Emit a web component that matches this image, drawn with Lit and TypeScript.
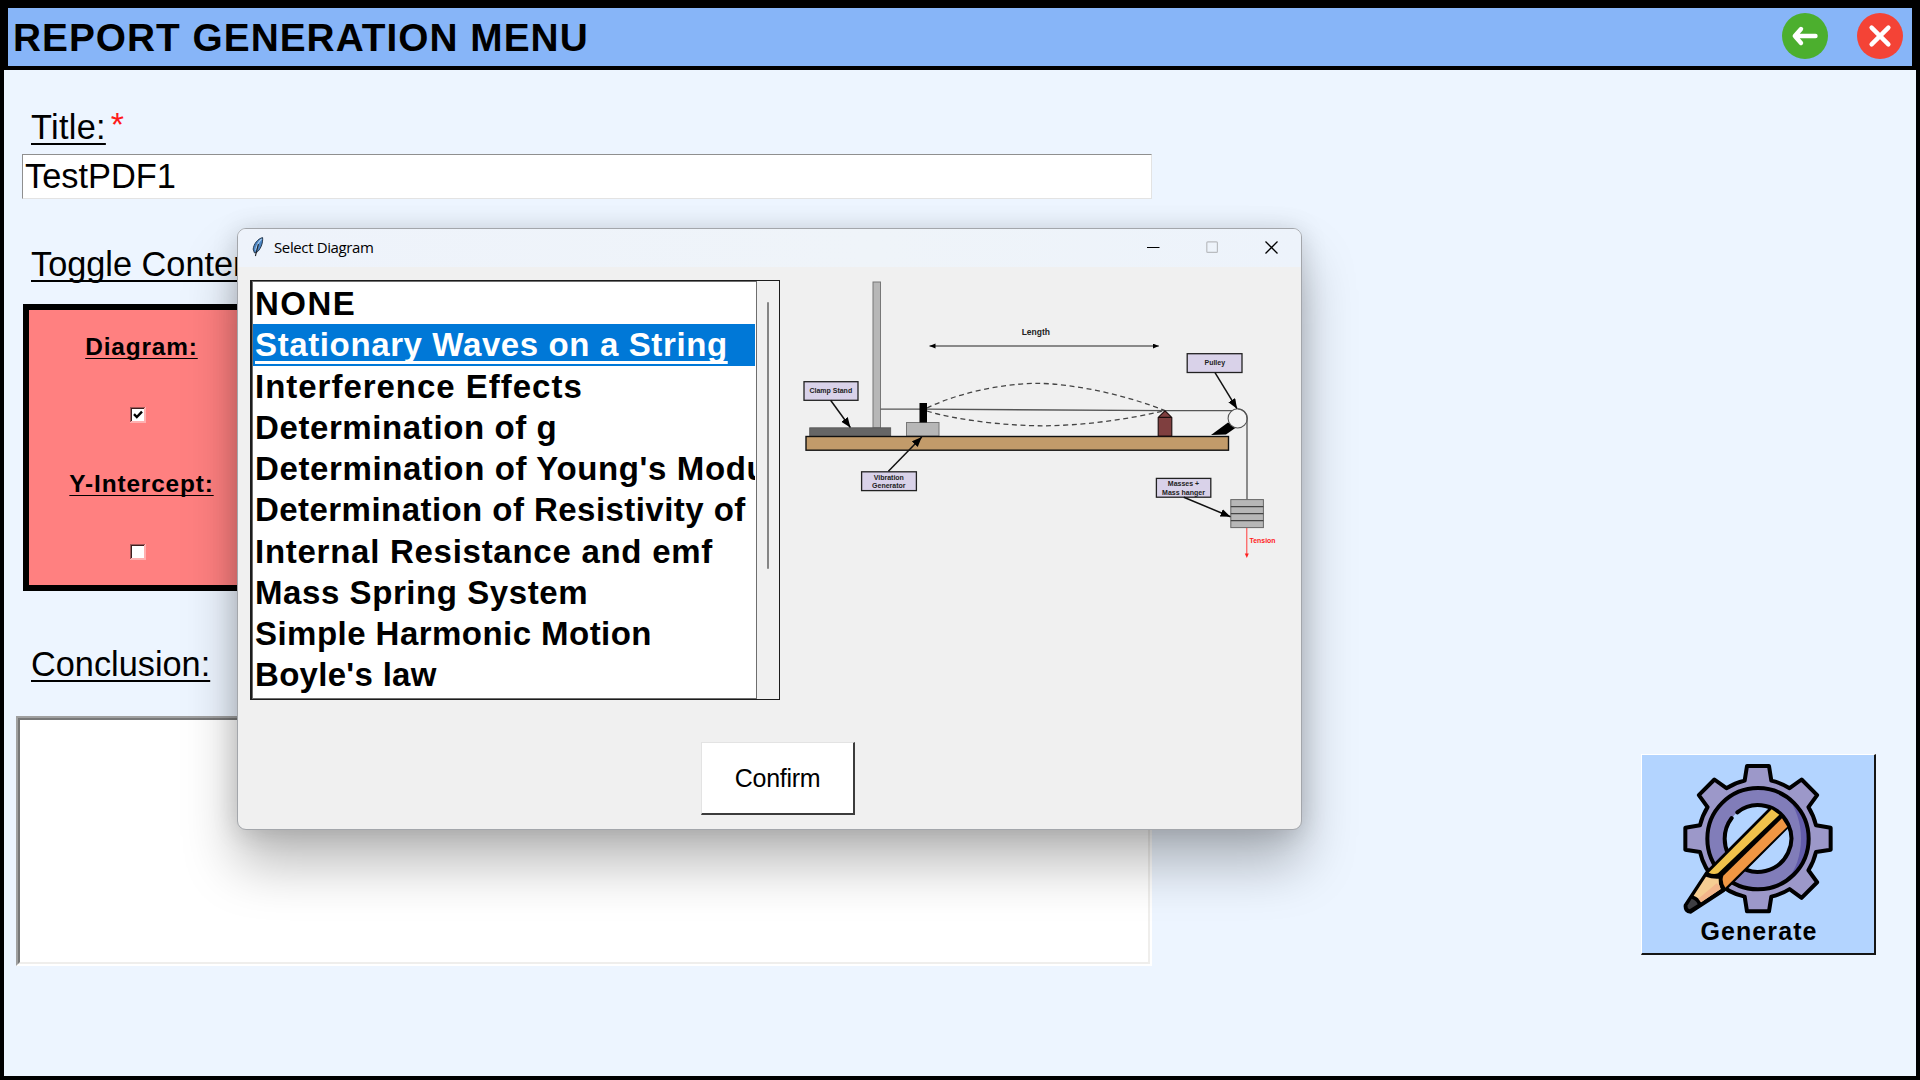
import { LitElement, html, css, svg } from "lit";
import { customElement, property } from "lit/decorators.js";
import { classMap } from "lit/directives/class-map.js";
import { styleMap } from "lit/directives/style-map.js";

interface Experiment {
  name: string;
  tracking: number;
}

const EXPERIMENTS: Experiment[] = [
  { name: "NONE", tracking: 1.5 },
  { name: "Stationary Waves on a String", tracking: 0.62 },
  { name: "Interference Effects", tracking: 0.98 },
  { name: "Determination of g", tracking: 0.6 },
  { name: "Determination of Young's Modulus", tracking: 0.62 },
  { name: "Determination of Resistivity of", tracking: 0.45 },
  { name: "Internal Resistance and emf", tracking: 0.73 },
  { name: "Mass Spring System", tracking: 0.57 },
  { name: "Simple Harmonic Motion", tracking: 0.46 },
  { name: "Boyle's law", tracking: 0.3 },
];

/** Gear outline with a tooth every 45 degrees; the one under the pencil is left out. */
function gearPath(cx: number, cy: number): string {
  const tooth = [[-40, -174], [-33, -218], [33, -218], [40, -174]];
  const parts: string[] = [];
  for (let i = 0; i < 8; i++) {
    const a = (i * Math.PI) / 4;
    if (i === 5) continue;
    tooth.forEach(([x, y], n) => {
      const px = (cx + x * Math.cos(a) - y * Math.sin(a)).toFixed(1);
      const py = (cy + x * Math.sin(a) + y * Math.cos(a)).toFixed(1);
      if (n > 0) parts.push(`L${px} ${py}`);
      else parts.push(i === 0 ? `M${px} ${py}` : `A178.5 178.5 0 0 1 ${px} ${py}`);
    });
  }
  parts.push("A178.5 178.5 0 0 1 376 122Z");
  return parts.join("");
}

@customElement("tick-box")
class TickBox extends LitElement {
  @property({ type: Boolean }) checked = false;
  static styles = css`
    :host { display: block; width: 16px; height: 16px; }
    svg { display: block; }
  `;
  render() {
    return html`<svg width="16" height="16" viewBox="0 0 16 16">
      <rect width="16" height="16" fill="#ffb0b0" />
      <path d="M0 0H15V1H1V15H0Z" fill="#a05858" />
      <path d="M1 1H14V2H2V14H1Z" fill="#3c2020" />
      <rect x="2" y="2" width="12" height="12" fill="#fff" />
      ${this.checked ? svg`<path d="M4 7.2L6.8 10L12 4.6" fill="none" stroke="#000" stroke-width="2.4" />` : ""}
    </svg>`;
  }
}

@customElement("wave-diagram")
class WaveDiagram extends LitElement {
  static styles = css`
    :host { display: block; }
    svg { display: block; }
    text { font-family: "Liberation Sans", Arial, sans-serif; font-weight: bold; font-size: 7px; text-anchor: middle; fill: #222; }
    .length { font-size: 8.5px; }
    .tension { font-size: 6.9px; text-anchor: start; fill: #ff2020; }
    .tag { fill: #d9d2e9; stroke: #222; stroke-width: 1.3; }
    .pointer { stroke: #111; stroke-width: 1.5; marker-end: url(#head); }
    .wave { fill: none; stroke: #444; stroke-width: 1.3; stroke-dasharray: 5 3.6; }
    .cord { fill: none; stroke: #555; stroke-width: 1.3; }
  `;
  render() {
    return html`<svg width="490" height="300" viewBox="800 280 490 300">
      <defs>
        <marker id="head" markerUnits="userSpaceOnUse" markerWidth="11" markerHeight="9" refX="10" refY="4" orient="auto">
          <path d="M0 0L10 4L0 8Z" fill="#000" />
        </marker>
        <marker id="small" markerUnits="userSpaceOnUse" markerWidth="7" markerHeight="6" refX="6" refY="2.5" orient="auto-start-reverse">
          <path d="M0 0L6 2.5L0 5Z" fill="#000" />
        </marker>
      </defs>
      <rect x="873" y="282" width="7.5" height="146" fill="#b7b7b7" stroke="#777" />
      <rect x="809.7" y="427.8" width="81" height="8" fill="#666" stroke="#555" stroke-width=".8" />
      <rect x="906.5" y="422.5" width="32.5" height="13.5" fill="#b7b7b7" stroke="#777" />
      <rect x="806" y="436.5" width="422.5" height="13.7" fill="#c29b6a" stroke="#111" stroke-width="1.4" />
      <path class="cord" d="M880.5 409.2H925L1165 410.6H1238" />
      <path class="wave" d="M927 408C960 392 1005 383.4 1037 383.4C1075 383.4 1128 396 1165 410.5" />
      <path class="wave" d="M927 411C960 421 1010 425.8 1042 425.8C1080 425.8 1125 420 1163 411" />
      <rect x="919.5" y="403" width="7.5" height="19.5" fill="#000" />
      <path d="M1158.2 436V417.4L1165 410.8L1171.8 417.4V436ZM1158.2 417.4H1171.8" fill="#7f3f3f" stroke="#1c0c0c" stroke-width="1.1" />
      <path d="M1211 435L1228 422.5L1236 427.5L1226 434.5Z" fill="#000" />
      <circle cx="1237.7" cy="418.4" r="9.6" fill="#f4f4f4" stroke="#555" stroke-width="1.1" />
      <path class="cord" d="M1237.7 408.8A9.6 9.6 0 0 1 1247 418V499.5" />
      <rect x="1230.8" y="499.6" width="32.6" height="28" fill="#b7b7b7" stroke="#666" />
      <path d="M1230.8 506.6H1263.4M1230.8 513.6H1263.4M1230.8 520.6H1263.4" stroke="#444" stroke-width="1.1" />
      <path d="M1246.8 528V555" stroke="#ff3b3b" />
      <path d="M1244.8 553.5H1248.8L1246.8 558Z" fill="#ff2020" />
      <text class="tension" x="1249.6" y="543.4">Tension</text>
      <path d="M929.5 346H1158.8" stroke="#222" stroke-width="1.2" marker-start="url(#small)" marker-end="url(#small)" />
      <text class="length" x="1035.8" y="334.8">Length</text>
      <rect class="tag" x="804" y="381.7" width="54" height="18.6" />
      <text x="830.8" y="393.4">Clamp Stand</text>
      <path class="pointer" d="M830.6 400.3L850.4 427.5" />
      <rect class="tag" x="861.6" y="471.8" width="54.8" height="18.8" />
      <text x="888.8" y="479.8">Vibration</text>
      <text x="888.8" y="488.2">Generator</text>
      <path class="pointer" d="M888.4 471.3L921.8 437" />
      <rect class="tag" x="1187.2" y="353.7" width="54.8" height="18.8" />
      <text x="1214.8" y="365.4">Pulley</text>
      <path class="pointer" d="M1215 372.7L1237 408.7" />
      <rect class="tag" x="1156.4" y="478.4" width="54.4" height="18.8" />
      <text x="1183.5" y="486.2">Masses +</text>
      <text x="1183.5" y="494.7">Mass hanger</text>
      <path class="pointer" d="M1183.8 497.3L1230.5 516.7" />
    </svg>`;
  }
}

@customElement("diagram-dialog")
class DiagramDialog extends LitElement {
  @property({ type: Number }) selected = 1;
  static styles = css`
    :host {
      display: flex; flex-direction: column; box-sizing: border-box; width: 1065px; height: 602px;
      border: 1px solid #a3a6ab; border-radius: 9px; background: #f0f0f0; overflow: hidden;
      box-shadow: 0 34px 54px rgba(0, 0, 0, 0.27), 0 2px 26px rgba(0, 0, 0, 0.15);
    }
    .bar { display: flex; align-items: center; box-sizing: border-box; height: 38px; padding: 0 0 2px 14px; background: linear-gradient(90deg, #eef3fb, #eff4f9 60%, #edf3fb); flex: none; }
    .feather { margin-right: 10px; }
    .name { flex: 1; font: 15px/36px "Open Sans", "Noto Sans", sans-serif; letter-spacing: -0.38px; color: #000; }
    .controls { display: flex; gap: 46px; padding-right: 23px; }
    .controls svg, .feather { display: block; }
    .body { display: flex; gap: 20px; padding: 13px 0 0 12px; }
    .list { display: flex; box-sizing: border-box; width: 530px; height: 420px; border: 1px solid #1c1c1c; border-left-width: 2px; }
    .items { box-sizing: border-box; flex: 1; border: 1px solid #6e6e6e; background: #fff; padding: 1px 1px 0 0; overflow: hidden; }
    .row { height: 41.25px; font: bold 33px/41.25px "Liberation Sans", Arial, sans-serif; white-space: nowrap; overflow: hidden; color: #000; padding-left: 2px; }
    .row.on { background: #0078d7; color: #fff; text-decoration: underline 3px; text-underline-offset: 4.6px; text-decoration-skip-ink: none; }
    .track { width: 22px; display: flex; justify-content: center; padding-top: 21px; box-sizing: border-box; }
    .thumb { width: 2.5px; height: 267px; border-radius: 1px; background: #858585; }
    .foot { display: flex; padding: 42px 0 0 463px; }
    .confirm {
      box-sizing: border-box; width: 154px; height: 73px; background: #fff; text-align: center; color: #000;
      border: 1px solid #e3e3e3; border-right: 2px solid #3c3c3c; border-bottom: 2px solid #3c3c3c;
      font: 25px/71px "Liberation Sans", Arial, sans-serif; letter-spacing: -0.3px;
    }
  `;
  render() {
    return html`
      <div class="bar">
        <svg class="feather" width="12" height="20" viewBox="0 0 12 20">
          <path d="M10.6 .6C6 1.6 1.6 7 1.2 12.2L2.4 15.8L4.4 15.6C8.4 13 11.2 6 10.6 .6Z" fill="#4a85c4" stroke="#26384c" stroke-width="1" />
          <path d="M9.6 2C6.4 5 4.6 9 3.6 13.4" fill="none" stroke="#a9cbee" stroke-width="1.1" />
          <path d="M6.4 7L3.4 19" fill="none" stroke="#20242a" stroke-width="1.1" />
        </svg>
        <div class="name">Select Diagram</div>
        <div class="controls">
          <svg width="13" height="13" viewBox="0 0 13 13"><path d="M0 6.5H12.5" stroke="#000" stroke-width="1.1" /></svg>
          <svg width="13" height="13" viewBox="0 0 13 13"><rect x=".8" y=".8" width="10.6" height="10.6" rx="1" fill="none" stroke="#b9bcc0" stroke-width="1.2" /></svg>
          <svg width="13" height="13" viewBox="0 0 13 13"><path d="M.5 .5L12.5 12.5M12.5 .5L.5 12.5" stroke="#000" stroke-width="1.3" /></svg>
        </div>
      </div>
      <div class="body">
        <div class="list">
          <div class="items">
            ${EXPERIMENTS.map((e, i) => html`<div
              class=${classMap({ row: true, on: i === this.selected })}
              style=${styleMap({ letterSpacing: `${e.tracking}px` })}>${e.name}</div>`)}
          </div>
          <div class="track"><div class="thumb"></div></div>
        </div>
        <wave-diagram></wave-diagram>
      </div>
      <div class="foot"><div class="confirm">Confirm</div></div>
    `;
  }
}

@customElement("app-root")
class AppRoot extends LitElement {
  static styles = css`
    :host {
      display: flex; flex-direction: column; position: relative; box-sizing: border-box; width: 1920px; height: 1080px;
      padding: 0 4px 4px; background: #000; overflow: hidden; color: #000; font-family: "Liberation Sans", Arial, sans-serif;
    }
    header { display: flex; align-items: center; gap: 29px; height: 58px; margin: 8px 4px 4px; padding: 0 9px 0 5px; background: #87b5f8; }
    h1 { flex: 1; margin: 0; font-size: 38.8px; line-height: 59px; letter-spacing: 1.02px; white-space: nowrap; }
    header svg { display: block; margin-top: -2px; }
    main { flex: 1; display: flex; justify-content: space-between; background: #edf5ff; }
    .form { display: flex; flex-direction: column; width: 1148px; padding: 37px 0 0 12px; box-sizing: border-box; }
    .label { display: flex; margin-left: 15px; font-size: 34.3px; line-height: 40px; white-space: nowrap; }
    .label u { text-decoration: underline 2px; text-underline-offset: 4px; text-decoration-skip-ink: none; }
    .title { letter-spacing: 0.3px; }
    .star { color: #ff1a1a; font-size: 34px; line-height: 34px; margin-left: 5px; }
    .entry { box-sizing: border-box; height: 45px; margin: 7px 0 45px 6px; padding-left: 2px; background: #fff; border: 1px solid #e3e3e3; border-top-color: #8f8f8f; border-left-color: #8f8f8f; font-size: 34.4px; line-height: 43px; }
    .panel { box-sizing: border-box; width: 700px; height: 287px; margin: 20px 0 53px 7px; border: 6px solid #000; background: #ff8080; }
    .column { display: flex; flex-direction: column; align-items: center; width: 225px; }
    .opt { font-size: 24.4px; line-height: 28px; font-weight: bold; letter-spacing: 0.85px; text-decoration: underline 1px; text-underline-offset: 3px; text-decoration-skip-ink: none; }
    .diagram { margin: 23px 0 46px; }
    .intercept { margin: 47px 0 46px; }
    tick-box { margin-right: 7px; }
    .area { box-sizing: border-box; height: 250px; margin-top: 32px; background: #fff; border: 2px solid #fff; border-top-color: #a0a0a0; border-left-color: #a0a0a0; }
    .well { box-sizing: border-box; height: 100%; border: 2px solid #efeeec; border-top-color: #787878; border-left-color: #787878; }
    .generate {
      box-sizing: border-box; display: flex; flex-direction: column; align-items: center; width: 235px; height: 201px; margin: 684px 40px 0 0;
      background: #b3d4ff; border: 1px solid #fff; border-right: 2px solid #151515; border-bottom: 2px solid #151515;
      font-size: 25px; line-height: 28px; font-weight: bold; letter-spacing: 1.1px;
    }
    .generate svg { display: block; margin-top: 5px; }
    .generate span { padding-left: 2px; }
    diagram-dialog { position: absolute; left: 237px; top: 228px; }
  `;
  render() {
    return html`
      <header>
        <h1>REPORT GENERATION MENU</h1>
        <svg width="46" height="46" viewBox="-23 -23 46 46">
          <circle r="23" fill="#4caf2e" />
          <path d="M10.5 0H-10M-4 -7L-10.2 0L-4 7" fill="none" stroke="#fff" stroke-width="4.4" stroke-linecap="round" stroke-linejoin="round" />
        </svg>
        <svg width="46" height="46" viewBox="-23 -23 46 46">
          <circle r="23" fill="#f44336" />
          <path d="M-8.4 -8.4L8.4 8.4M8.4 -8.4L-8.4 8.4" stroke="#fff" stroke-width="4.4" stroke-linecap="round" />
        </svg>
      </header>
      <main>
        <div class="form">
          <div class="label"><u class="title">Title:</u><span class="star">*</span></div>
          <div class="entry">TestPDF1</div>
          <div class="label"><u>Toggle Contents:</u></div>
          <div class="panel">
            <div class="column">
              <div class="opt diagram">Diagram:</div>
              <tick-box checked></tick-box>
              <div class="opt intercept">Y-Intercept:</div>
              <tick-box></tick-box>
            </div>
          </div>
          <div class="label"><u>Conclusion:</u></div>
          <div class="area"><div class="well"></div></div>
        </div>
        <div class="generate">
          <svg width="153.33" height="156.67" viewBox="185 60 460 470" stroke-linejoin="round" stroke-linecap="round">
            <path d=${gearPath(416, 296)} fill="#9c98c9" stroke="#000" stroke-width="12" />
            <circle cx="416" cy="296" r="152" fill="#817db9" />
            <path d="M500 169A152 152 0 0 1 500 423C560 360 560 232 500 169Z" fill="#625caa" />
            <circle cx="416" cy="296" r="152" fill="none" stroke="#000" stroke-width="12" />
            <circle cx="416" cy="296" r="100" fill="#b3d4ff" />
            <path d="M354 217A100 100 0 1 1 316 296Q316 262 337 234" fill="none" stroke="#000" stroke-width="12" />
            <path d="M452 207L262 397L197 496Q195 516 214 517L314 452L509 257Q486 222 452 207Z" fill="#000" stroke="#000" stroke-width="8" />
            <path d="M457 208L480 224L296 400Q282 405 268 398Z" fill="#f0c24b" stroke="none" />
            <path d="M488 235L504 260L318 443Q306 425 312 407Z" fill="#f09643" stroke="none" />
            <path d="M260 410Q276 417 298 416Q297 434 304 447L245 487Q240 474 223 467Z" fill="#f6cd92" stroke="none" />
            <path d="M292 430L299 436L304 447L245 487L237 476Z" fill="#f3b58a" stroke="none" />
            <path d="M217 476Q231 481 235 493L211 508Q203 506 205 496Z" fill="#3e3e42" stroke="none" />
          </svg>
          <span>Generate</span>
        </div>
      </main>
      <diagram-dialog></diagram-dialog>
    `;
  }
}
